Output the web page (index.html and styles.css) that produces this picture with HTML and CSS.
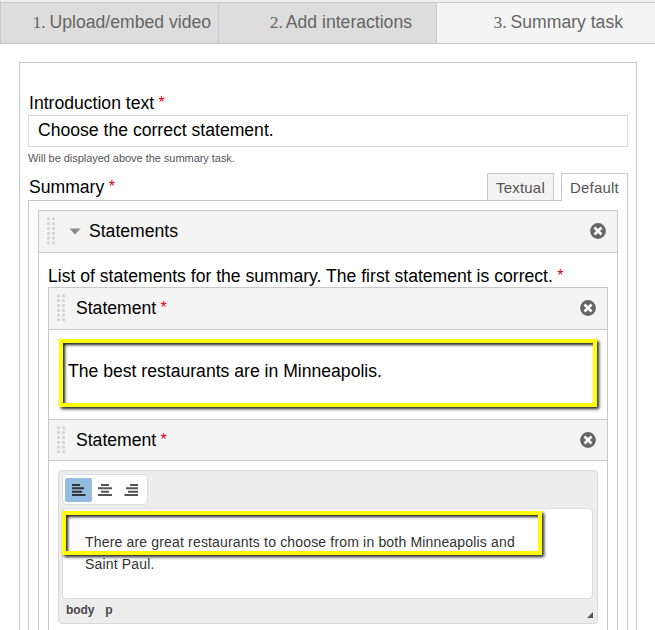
FILE: index.html
```html
<!DOCTYPE html>
<html lang="en">
<head>
<meta charset="utf-8">
<title>Summary task</title>
<link rel="stylesheet" href="styles.css">
</head>
<body>
<svg class="defs" width="0" height="0">
  <defs>
    <symbol id="grip" viewBox="0 0 8 28"><path d="M1.5 0.5v28M6.5 0.5v28" fill="none" stroke="#d3d3d3" stroke-width="2.8" stroke-dasharray="2.8 2"/></symbol>
    <symbol id="remove" viewBox="0 0 16 16"><circle cx="8" cy="8" r="7.9" fill="#666"/><path d="M4.5 4.5l7 7M11.5 4.5l-7 7" stroke="#fff" stroke-width="2.7"/></symbol>
  </defs>
</svg>
<nav class="steps">
  <div class="step"><span class="num">1.</span> <span>Upload/embed video</span></div>
  <div class="step"><span class="num">2.</span> <span>Add interactions</span></div>
  <div class="step active"><span class="num">3.</span> <span>Summary task</span></div>
</nav>
<main class="panel">
  <div class="label intro">Introduction text <b>*</b></div>
  <div class="input">Choose the correct statement.</div>
  <div class="help">Will be displayed above the summary task.</div>
  <div class="summary-head">
    <div class="label">Summary <b>*</b></div>
    <div class="tabs"><div class="tab">Textual</div><div class="tab current">Default</div></div>
  </div>
  <section class="summary">
    <section class="group">
      <header class="bar">
        <svg class="grip"><use href="#grip"/></svg>
        <svg class="arrow" viewBox="0 0 12 7"><path d="M0.5 0.5h11L6 6.5z" fill="#888"/></svg>
        <span>Statements</span>
        <svg class="remove"><use href="#remove"/></svg>
      </header>
      <div class="label list-label">List of statements for the summary. The first statement is correct. <b>*</b></div>
      <div class="list">
        <header class="bar sub">
          <svg class="grip"><use href="#grip"/></svg>
          <span>Statement <b>*</b></span>
          <svg class="remove"><use href="#remove"/></svg>
        </header>
        <div class="answer"><div class="field">The best restaurants are in Minneapolis.</div></div>
        <header class="bar sub second">
          <svg class="grip"><use href="#grip"/></svg>
          <span>Statement <b>*</b></span>
          <svg class="remove"><use href="#remove"/></svg>
        </header>
        <div class="editor">
          <div class="tools">
            <div class="tool on"><svg viewBox="0 0 14 14"><path d="M0 2h8M0 5.3h12M0 8.7h10M0 12h13.5"/></svg></div>
            <div class="tool"><svg viewBox="0 0 14 14"><path d="M3 2h8M0 5.3h14M3 8.7h8M0 12h14"/></svg></div>
            <div class="tool"><svg viewBox="0 0 14 14"><path d="M6 2h8M2 5.3h12M4 8.7h10M0.5 12h13.5"/></svg></div>
          </div>
          <div class="content">There are great restaurants to choose from in both Minneapolis and<br>Saint Paul.<div class="mark"></div></div>
          <div class="path"><span>body</span><span>p</span><i class="resize"></i></div>
        </div>
      </div>
    </section>
  </section>
</main>
</body>
</html>
```

FILE: styles.css
```css
* { box-sizing: border-box; }
body {
  margin: 0;
  height: 630px;
  overflow: hidden;
  background: #fff;
  color: #000;
  font: 17.6px/20px "Liberation Sans", Arial, sans-serif;
}
.defs { position: absolute; }
b { color: #d8000c; font-weight: 400; font-size: 16px; line-height: 1; vertical-align: 1px; margin-left: -0.5px; }

.steps {
  display: grid;
  grid-template-columns: 218px 218px 1fr;
  height: 44px;
  border-top: 2px solid #efefef;
  border-left: 1px solid #c8c8c8;
}
.step {
  padding: 9px 7px 0 0;
  text-align: right;
  color: #666;
  background: #ddd;
  border: solid #c8c8c8;
  border-width: 1px 1px 1px 0;
}
.step:nth-child(2) { padding-right: 24px; }
.step.active { padding-right: 32px; background: #f4f4f4; border-right: 0; }
.num { font-family: "Liberation Serif", serif; margin-right: -1px; }

.panel {
  width: 618px;
  height: 568px;
  overflow: hidden;
  margin: 18px 0 0 19px;
  padding: 30px 8px 0;
  border: 1px solid #c8c8c8;
  border-bottom: 0;
}
.intro { height: 22px; padding-left: 1px; }
.input { height: 32px; padding: 4px 9px; border: 1px solid #d8d8d8; }
.help { height: 26px; padding-top: 1px; font-size: 11px; letter-spacing: -0.04px; color: #555; }
.summary-head { display: flex; justify-content: space-between; height: 28px; }
.summary-head .label { padding: 4px 0 0 1px; }
.tabs { display: flex; gap: 7px; }
.tab {
  height: 27px;
  width: 67px;
  padding: 4px 0 0 8px;
  font-size: 15px;
  letter-spacing: 0.2px;
  color: #555;
  background: #f3f3f3;
  border: 1px solid #c8c8c8;
  border-bottom: 0;
}
.tab.current { position: relative; height: 28px; background: #fff; }
.summary { margin-top: -1px; height: 431px; padding: 9px 9px 0; border: 1px solid #c8c8c8; border-bottom: 0; }
.group { height: 421px; border: 1px solid #c8c8c8; border-bottom: 0; }
.bar {
  display: flex;
  align-items: center;
  height: 42px;
  padding: 0 11px 1px 8px;
  background: #f4f4f4;
  border-bottom: 1px solid #c8c8c8;
}
.grip { width: 8px; height: 28px; }
.arrow { width: 12px; height: 7px; margin: 0 8px 0 14px; }
.remove { width: 16px; height: 16px; margin-left: auto; }
.sub .grip { margin-right: 11px; }
.list-label { height: 34px; padding: 13px 0 0 9px; }
.list { height: 343px; margin: 0 9px; border: 1px solid #c8c8c8; border-bottom: 0; }
.answer { height: 89px; padding: 9px 10px; }
.field {
  height: 68px;
  padding: 18px 5px;
  border: 4px solid #ff0;
  box-shadow: 2px 2px 3px #222, inset 2px 2px 3px #222;
}
.second { height: 42px; border-top: 1px solid #c8c8c8; }
.editor {
  height: 154px;
  margin: 9px 9px 0;
  padding: 3px 4px 3px 3px;
  background: #ededed;
  border: 1px solid #d8d8d8;
  border-radius: 4px;
}
.tools {
  display: flex;
  width: 86px;
  height: 31px;
  padding: 3px 2px;
  background: #fff;
  border: 1px solid #ddd;
  border-radius: 4px;
}
.tool { display: grid; place-items: center; width: 26px; height: 24px; border-radius: 2px; }
.tool.on { width: 27px; background: #93bce0; }
.tool svg { width: 14px; height: 14px; fill: none; stroke: #555; stroke-width: 2.1; }
.tool.on svg { stroke: #333; }
.content {
  position: relative;
  height: 91px;
  margin-top: 3px;
  padding: 22px 22px 0;
  font-size: 14px;
  letter-spacing: 0.17px;
  line-height: 22px;
  color: #333;
  background: #fff;
  border: 1px solid #ddd;
  border-radius: 4px;
  white-space: nowrap;
}
.mark {
  position: absolute;
  left: -1px;
  top: 2px;
  width: 480px;
  height: 44px;
  border: 4px solid #ff0;
  box-shadow: 2px 2px 3px #222, inset 2px 2px 3px #222;
}
.path { display: flex; gap: 11px; padding: 1px 0 0 4px; font-size: 12px; letter-spacing: -0.1px; font-weight: 700; color: #484848; }
.resize { margin: 12px 0 0 auto; width: 6px; height: 6px; background: #555; clip-path: polygon(100% 0, 100% 100%, 0 100%); }
```
